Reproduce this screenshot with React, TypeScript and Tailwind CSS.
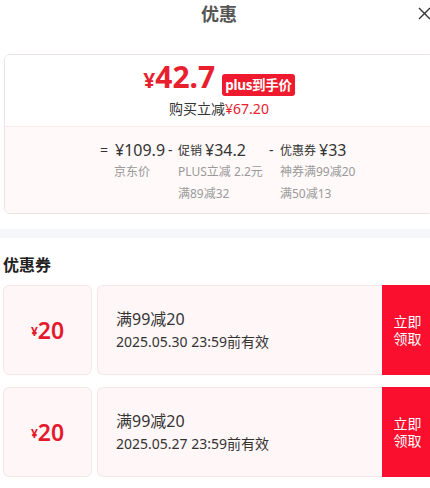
const coupons = [
  { amount: "20", rule: "满99减20", expire: "2025.05.30 23:59前有效" },
  { amount: "20", rule: "满99减20", expire: "2025.05.27 23:59前有效" },
];

function CloseIcon() {
  return (
    <svg width="13" height="13" viewBox="0 0 13 13" fill="none" stroke="#333" strokeWidth="1.4">
      <path d="M1 1l11 11M12 1L1 12" />
    </svg>
  );
}

export default function App() {
  return (
    <div className="w-full h-screen overflow-hidden bg-white font-['Noto_Sans','Noto_Sans_CJK_SC',sans-serif]">
      <div className="w-[438px]">
        {/* Header */}
        <div className="relative h-[27px] flex items-center justify-center">
          <span className="text-[18px] leading-none font-bold text-[#555]">优惠</span>
          <button className="absolute right-[7px] top-[7px]">
            <CloseIcon />
          </button>
        </div>

        {/* Price summary card */}
        <div className="mt-[27px] mx-[4px] border border-[#f0e2e4] rounded-[6px] overflow-hidden">
          <div className="h-[71px] bg-white flex flex-col items-center pt-[10px]">
            <div className="h-[30px] flex items-end gap-[7px]">
              <div className="flex items-baseline text-[#e8202e] font-bold">
                <span className="text-[21px] leading-[30px]">¥</span>
                <span className="text-[30px] leading-[30px]">42.7</span>
              </div>
              <span className="h-[22px] mb-[-1px] px-[3px] rounded-[3px] bg-[#ef1a2d] text-white text-[13.5px] font-bold leading-[22px] tracking-[-0.3px]">
                plus到手价
              </span>
            </div>
            <div className="mt-[4px] text-[14px] leading-[20px] text-[#333]">
              购买立减<span className="text-[#e8202e]">¥67.20</span>
            </div>
          </div>

          <div className="bg-[#fff9f9] border-t border-[#fbecee] pt-[12px] pb-[8px] pl-[95px] flex text-[#333]">
            {/* 京东价 */}
            <div className="w-[68px] flex">
              <span className="w-[15px] h-[22px] text-[14px] leading-[22px]">=</span>
              <div className="flex flex-col">
                <span className="h-[22px] text-[16px] leading-[22px]">¥109.9</span>
                <span className="h-[22px] text-[12px] leading-[22px] text-[#999] -ml-[1px]">京东价</span>
              </div>
            </div>
            {/* 促销 */}
            <div className="w-[101px] flex">
              <span className="w-[10px] h-[22px] text-[14px] leading-[22px]">-</span>
              <div className="flex flex-col">
                <div className="h-[22px] flex items-center gap-[3px] leading-[22px]">
                  <span className="text-[12px] pt-[1px]">促销</span>
                  <span className="text-[16px]">¥34.2</span>
                </div>
                <span className="h-[22px] text-[12px] leading-[22px] text-[#999] whitespace-nowrap">PLUS立减 2.2元</span>
                <span className="h-[22px] text-[12px] leading-[22px] text-[#999]">满89减32</span>
              </div>
            </div>
            {/* 优惠券 */}
            <div className="flex">
              <span className="w-[11px] h-[22px] text-[14px] leading-[22px]">-</span>
              <div className="flex flex-col">
                <div className="h-[22px] flex items-center gap-[3px] leading-[22px]">
                  <span className="text-[12px] pt-[1px]">优惠券</span>
                  <span className="text-[16px]">¥33</span>
                </div>
                <span className="h-[22px] text-[12px] leading-[22px] text-[#999]">神券满99减20</span>
                <span className="h-[22px] text-[12px] leading-[22px] text-[#999]">满50减13</span>
              </div>
            </div>
          </div>
        </div>

        {/* Divider band */}
        <div className="mt-[15px] h-[9px] bg-[#f6f7fb]" />

        {/* Coupons */}
        <div className="pl-[3px] pt-[16px] text-[16px] leading-[22px] font-bold text-[#222]">优惠券</div>

        <div className="mt-[9px] flex flex-col gap-[12px]">
          {coupons.map((c, i) => (
            <div key={i} className="h-[90px] flex pl-[3px]">
              <div className="w-[89px] rounded-[6px] border border-[#f6e6e8] bg-[#fff6f7] flex items-center justify-center text-[#e5192d]">
                <span className="text-[12px] font-bold mt-[4px]">¥</span>
                <span className="text-[23px] font-semibold leading-none">{c.amount}</span>
              </div>
              <div className="ml-[5px] flex-1 rounded-l-[6px] border border-r-0 border-[#f6e6e8] bg-[#fff6f7] flex flex-col justify-center pl-[18px] text-[#333]">
                <span className="text-[16px] leading-[22px]">{c.rule}</span>
                <span className="text-[14px] leading-[22px] mt-[1px]">{c.expire}</span>
              </div>
              <button className="w-[56px] bg-[#fb0f2e] text-white text-[14px] leading-[17px] flex flex-col items-center justify-center pr-[5px]">
                <span>立即</span>
                <span>领取</span>
              </button>
            </div>
          ))}
        </div>
      </div>
    </div>
  );
}
